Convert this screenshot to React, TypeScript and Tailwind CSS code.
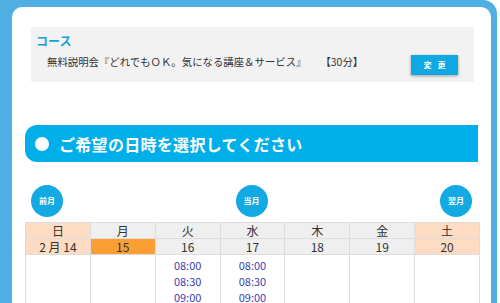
import React from 'react';

const days = [
  { name: '日', date: '2 月 14', weekend: true },
  { name: '月', date: '15', today: true },
  { name: '火', date: '16', times: ['08:00', '08:30', '09:00'] },
  { name: '水', date: '17', times: ['08:00', '08:30', '09:00'] },
  { name: '木', date: '18' },
  { name: '金', date: '19' },
  { name: '土', date: '20', weekend: true },
];

const MonthButton: React.FC<{ label: string }> = ({ label }) => (
  <button className="w-[32px] h-[32px] rounded-full bg-[#13a9e3] text-white text-[8px] font-bold flex items-center justify-center">
    {label}
  </button>
);

const App: React.FC = () => {
  return (
    <div
      className="w-[500px] h-[303px] overflow-hidden bg-white text-[#333]"
      style={{ fontFamily: '"Noto Sans CJK JP", "Noto Sans", sans-serif' }}
    >
      <div className="mr-[3px] bg-[#4faee2] pl-[12px] pt-[7px] pr-[6px] rounded-tr-[14px] h-[320px]">
        <div className="bg-white rounded-t-[10px] h-full pt-[20px]">
          {/* --- Course --- */}
          <div className="ml-[19px] mr-[17px] bg-[#f2f2f2] h-[55px] pl-[5px] pr-[16px] pt-[5px]">
            <p className="text-[12px] font-bold text-[#12a2d9] leading-[18px]">コース</p>
            <div className="flex items-center justify-between">
              <p className="pl-[11px] text-[10.4px] leading-[16px] mt-[-1px] flex">
                <span>無料説明会『どれでもＯＫ。気になる講座＆サービス』</span>
                <span className="ml-[14px]">【30分】</span>
              </p>
              <button className="mt-[5px] w-[47px] h-[20px] bg-[#0ea8e2] text-white text-[8px] font-bold tracking-[6px] pl-[6px] shadow-[0_1px_3px_rgba(0,0,0,0.35)]">
                変更
              </button>
            </div>
          </div>

          {/* --- Heading --- */}
          <div className="mt-[43px] mx-[13px] h-[37px] bg-[#00aee9] rounded-l-[12px] flex items-center pl-[10px] gap-[10px]">
            <span className="w-[14px] h-[14px] rounded-full bg-white" />
            <h2 className="text-white text-[16px] font-bold tracking-[0.3px]">ご希望の日時を選択してください</h2>
          </div>

          {/* --- Month nav --- */}
          <div className="mt-[23px] mx-[19px] flex justify-between">
            <MonthButton label="前月" />
            <MonthButton label="当月" />
            <MonthButton label="翌月" />
          </div>

          {/* --- Calendar --- */}
          <div className="mt-[5px] ml-[13px] w-[455px] grid grid-cols-7 border-t border-l border-[#ddd] text-[12px]">
            {days.map(d => (
              <div
                key={d.name}
                className={`h-[16px] leading-[15px] text-center border-r border-b border-[#ddd] ${d.weekend ? 'bg-[#fddcc3]' : 'bg-[#efefef]'}`}
              >
                {d.name}
              </div>
            ))}
            {days.map(d => (
              <div
                key={d.date}
                className={`h-[16px] leading-[15px] text-center border-r border-b border-[#ddd] ${d.today ? 'bg-[#fb9f35]' : d.weekend ? 'bg-[#fddcc3]' : 'bg-[#efefef]'}`}
              >
                {d.date}
              </div>
            ))}
            {days.map(d => (
              <div key={d.name + 't'} className="h-[70px] border-r border-[#ddd] text-center pt-[2px]">
                {(d.times || []).map(t => (
                  <p key={t} className="text-[11px] leading-[16px] text-[#3d3db5]">{t}</p>
                ))}
              </div>
            ))}
          </div>
        </div>
      </div>
    </div>
  );
};

export default App;
